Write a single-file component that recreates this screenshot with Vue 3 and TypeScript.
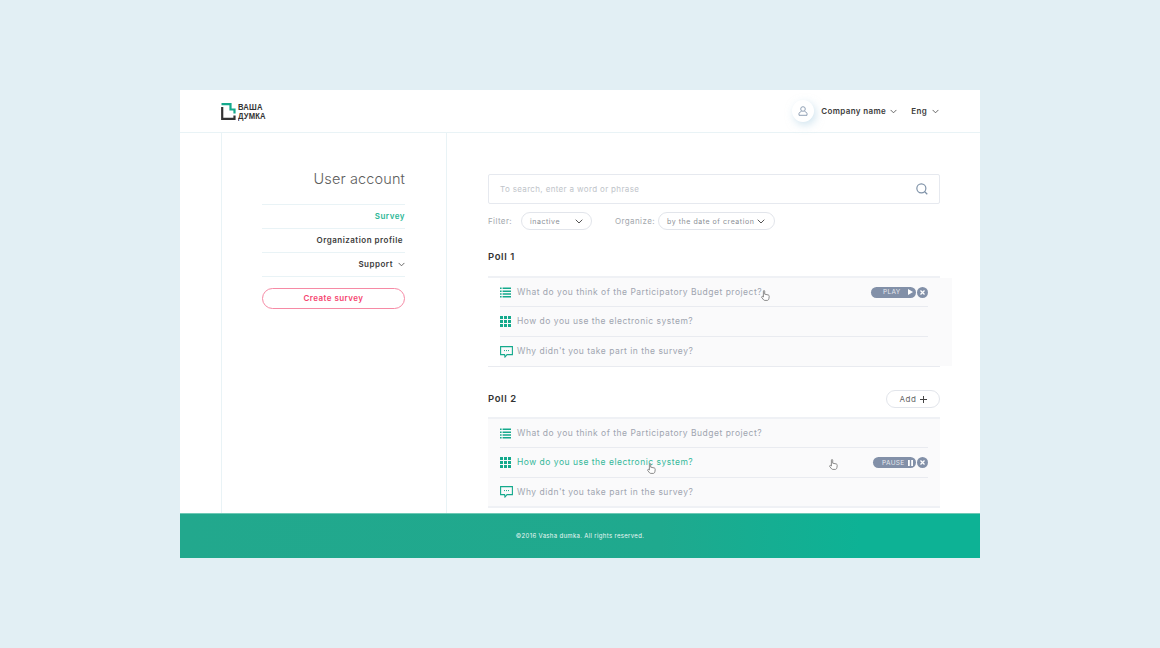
<template>
  <div class="page">
    <div class="card">
      <header class="topbar">
        <div class="logo">
          <svg class="logo-mark" width="15" height="17" viewBox="0 0 15 17">
            <path d="M.5 1.2H9.5V6.5H13.5V10.5" fill="none" stroke="#14a98c" stroke-width="2.2" />
            <path d="M1.2 4V15.8H13.5V12.5" fill="none" stroke="#333" stroke-width="2.2" />
          </svg>
          <div class="logo-text"><span>ВАША</span><span>ДУМКА</span></div>
        </div>
        <div class="top-right">
          <div class="avatar">
            <svg width="10" height="10" viewBox="0 0 10 10" fill="none" stroke="#8496ad" stroke-width="0.9">
              <circle cx="5" cy="3" r="2.3" />
              <path d="M3.5 5C3.5 6 1 6 1 7.5V9.3H9V7.5C9 6 6.5 6 6.5 5" />
            </svg>
          </div>
          <span class="top-link company">Company name</span>
          <svg class="chev" width="7" height="5" viewBox="0 0 8 5"><path d="M.7.7 4 4 7.3.7" /></svg>
          <span class="top-link lang">Eng</span>
          <svg class="chev" width="7" height="5" viewBox="0 0 8 5"><path d="M.7.7 4 4 7.3.7" /></svg>
        </div>
      </header>

      <div class="body">
        <aside class="sidebar">
          <h1>User account</h1>
          <nav class="side-nav">
            <a class="active">Survey</a>
            <a class="indent">Organization profile</a>
            <a>
              Support
              <svg class="chev" width="7" height="5" viewBox="0 0 8 5"><path d="M.7.7 4 4 7.3.7" /></svg>
            </a>
          </nav>
          <button class="create" type="button">Create survey</button>
        </aside>

        <main class="content">
          <div class="search">
            <span>To search, enter a word or phrase</span>
            <svg width="12" height="12" viewBox="0 0 13 13" fill="none" stroke="#7f92a8" stroke-width="1.3">
              <circle cx="5.8" cy="5.8" r="4.9" />
              <path d="M9.2 9.2 12.2 12.2" />
            </svg>
          </div>

          <div class="filters">
            <span class="filter-label">Filter:</span>
            <div class="pill inactive">
              <span>inactive</span>
              <svg class="chev" width="8" height="5" viewBox="0 0 8 5"><path d="M.7.7 4 4 7.3.7" /></svg>
            </div>
            <span class="filter-label organize">Organize:</span>
            <div class="pill by-date">
              <span>by the date of creation</span>
              <svg class="chev" width="8" height="5" viewBox="0 0 8 5"><path d="M.7.7 4 4 7.3.7" /></svg>
            </div>
          </div>

          <section v-for="poll in polls" :key="poll.title" class="poll">
            <div class="poll-head">
              <h2>{{ poll.title }}</h2>
              <button v-if="poll.addable" class="add" type="button">
                Add
                <svg width="7" height="7" viewBox="0 0 7 7"><path d="M3.5 0V7M0 3.5H7" stroke="#444" stroke-width="1" /></svg>
              </button>
            </div>
            <div class="list" :class="{ shifted: poll.shifted }">
              <div
                v-for="row in poll.rows"
                :key="row.text"
                class="row"
                :class="{ green: row.green }"
              >
                <svg v-if="row.icon === 'list'" class="icon" width="11" height="11" viewBox="0 0 11 11" fill="#14a98c">
                  <path d="M0 .5H1.6V2H0ZM2.6 .5H11V2H2.6ZM0 3.4H1.6V4.9H0ZM2.6 3.4H11V4.9H2.6ZM0 6.2H1.6V7.7H0ZM2.6 6.2H11V7.7H2.6ZM0 9H1.6V10.5H0ZM2.6 9H11V10.5H2.6Z" />
                </svg>
                <svg v-else-if="row.icon === 'grid'" class="icon" width="11" height="11" viewBox="0 0 11 11" fill="#14a98c">
                  <path d="M0 0H3V3H0ZM4 0H7V3H4ZM8 0H11V3H8ZM0 4H3V7H0ZM4 4H7V7H4ZM8 4H11V7H8ZM0 8H3V11H0ZM4 8H7V11H4ZM8 8H11V11H8Z" />
                </svg>
                <svg v-else class="icon chat" width="13" height="12" viewBox="0 0 13 12" fill="none">
                  <path d="M.6.6H12.4V8.6H7L5 11 4.6 8.6H.6Z" stroke="#14a98c" stroke-width="1.1" />
                  <path d="M4 4.6H9" stroke="#14a98c" stroke-width="1" stroke-dasharray="1 1" />
                </svg>
                <span class="question">{{ row.text }}</span>
                <div v-if="row.action" class="actions">
                  <span class="state" :class="row.action">
                    {{ row.action === 'play' ? 'PLAY' : 'PAUSE' }}
                    <svg v-if="row.action === 'play'" width="5" height="6" viewBox="0 0 5 6"><path d="M0 0 5 3 0 6Z" fill="#fff" /></svg>
                    <svg v-else width="5" height="6" viewBox="0 0 5 6"><path d="M0 0H1.8V6H0ZM3.2 0H5V6H3.2Z" fill="#fff" /></svg>
                  </span>
                  <span class="close">
                    <svg width="5" height="5" viewBox="0 0 5 5"><path d="M.5.5 4.5 4.5M4.5.5.5 4.5" stroke="#fff" stroke-width="1.3" /></svg>
                  </span>
                </div>
              </div>
            </div>
          </section>

          <svg
            v-for="hand in hands"
            :key="hand.id"
            class="hand"
            :class="hand.id"
            width="9"
            height="11"
            viewBox="0 0 9 11"
            fill="#fff"
            stroke="#6e6e6e"
            stroke-width="0.8"
          >
            <path d="M2.4 6V1.2C2.4.3 3.7.3 3.7 1.2V4.2L7 4.9C7.9 5.1 8.3 5.6 8.2 6.5L7.9 8.6C7.8 9.4 7.2 10.4 6.4 10.4H3.7C2.9 10.4 2.6 9.8 2.1 9.2L.8 7.6C.2 6.8 1.2 5.7 2.4 7Z" />
          </svg>
        </main>
      </div>

      <footer class="footer">©2016 Vasha dumka. All rights reserved.</footer>
    </div>
  </div>
</template>

<script setup lang="ts">
interface Row {
  icon: "list" | "grid" | "chat";
  text: string;
  green?: boolean;
  action?: "play" | "pause";
}

interface Poll {
  title: string;
  addable?: boolean;
  shifted?: boolean;
  rows: Row[];
}

const polls: Poll[] = [
  {
    title: "Poll 1",
    shifted: true,
    rows: [
      { icon: "list", text: "What do you think of the Participatory Budget project?", action: "play" },
      { icon: "grid", text: "How do you use the electronic system?" },
      { icon: "chat", text: "Why didn't you take part in the survey?" },
    ],
  },
  {
    title: "Poll 2",
    addable: true,
    rows: [
      { icon: "list", text: "What do you think of the Participatory Budget project?" },
      { icon: "grid", text: "How do you use the electronic system?", green: true, action: "pause" },
      { icon: "chat", text: "Why didn't you take part in the survey?" },
    ],
  },
];

const hands = [{ id: "hand-a" }, { id: "hand-b" }, { id: "hand-c" }];
</script>

<style>
html,
body {
  margin: 0;
  background: #e2eff4;
}
</style>

<style scoped>
.page {
  width: 1160px;
  height: 648px;
  padding-top: 90px;
  box-sizing: border-box;
  font-family: Inter, "Liberation Sans", sans-serif;
  overflow: hidden;
}

.card {
  width: 800px;
  height: 468px;
  margin-left: 180px;
  background: #fff;
  display: flex;
  flex-direction: column;
}

.topbar {
  height: 43px;
  box-sizing: border-box;
  flex: none;
  border-bottom: 1px solid #e9f3f6;
  padding: 0 41px;
  display: flex;
  align-items: center;
  justify-content: space-between;
}

.logo {
  display: flex;
  align-items: center;
  gap: 2px;
  margin-top: 1px;
}

.logo-mark {
  flex: none;
}

.logo-text {
  display: flex;
  flex-direction: column;
  font-family: "Liberation Sans", sans-serif;
  font-weight: 700;
  font-size: 8.5px;
  line-height: 8.5px;
  color: #333;
  letter-spacing: 0.2px;
  transform: scaleX(0.9);
  transform-origin: left center;
}

.top-right {
  display: flex;
  align-items: center;
}

.avatar {
  width: 22px;
  height: 22px;
  border-radius: 50%;
  background: #fff;
  box-shadow: 2px 3px 8px rgba(170, 205, 225, 0.55);
  display: flex;
  align-items: center;
  justify-content: center;
  margin-right: 7px;
}

.top-link {
  font-size: 8px;
  font-weight: 600;
  letter-spacing: 0.36px;
  color: #3c3c3c;
  white-space: nowrap;
}

.company {
  margin-top: -1px;
  margin-right: 4px;
}

.lang {
  margin-left: 14px;
  margin-right: 5px;
}

.chev {
  flex: none;
  fill: none;
  stroke: #555;
  stroke-width: 1;
}

.body {
  flex: 1;
  min-height: 0;
  display: flex;
  overflow: hidden;
}

.sidebar {
  width: 226px;
  flex: none;
  margin-left: 41px;
  box-sizing: border-box;
  border-left: 1px solid #e9f3f6;
  border-right: 1px solid #e9f3f6;
  padding: 36px 41px 0 40px;
  text-align: right;
}

.sidebar h1 {
  margin: 0;
  font-size: 14.5px;
  line-height: 20px;
  font-weight: 300;
  letter-spacing: 0.12px;
  color: #5d5d5d;
}

.side-nav {
  margin-top: 15px;
  border-top: 1px solid #e9f3f6;
}

.side-nav a {
  height: 24px;
  box-sizing: border-box;
  border-bottom: 1px solid #e9f3f6;
  padding-bottom: 1px;
  display: flex;
  align-items: center;
  justify-content: flex-end;
  gap: 5px;
  font-size: 8px;
  font-weight: 600;
  letter-spacing: 0.5px;
  color: #3c3c3c;
}

.side-nav a.active {
  color: #2bb797;
}

.side-nav a.indent {
  padding-right: 2px;
}

.create {
  display: block;
  width: 143px;
  height: 21px;
  margin-top: 11px;
  padding: 0 0 1px;
  border: 1px solid #f68aa5;
  border-radius: 11px;
  background: #fff;
  font-family: inherit;
  font-size: 8px;
  font-weight: 600;
  letter-spacing: 0.45px;
  color: #f5456f;
}

.content {
  position: relative;
  flex: 1;
  min-width: 0;
  padding: 41px 40px 0 41px;
}

.search {
  height: 30px;
  box-sizing: border-box;
  border: 1px solid #e6e9ef;
  border-radius: 2px;
  padding: 0 11px 0 11px;
  display: flex;
  align-items: center;
  justify-content: space-between;
  font-size: 8px;
  letter-spacing: 0.35px;
  color: #c0c4ca;
}

.search span {
  margin-top: -1px;
}

.filters {
  margin-top: 8px;
  height: 18px;
  display: flex;
  align-items: center;
  font-size: 8px;
  letter-spacing: 0.4px;
}

.filter-label {
  width: 33px;
  flex: none;
  margin-top: -1px;
  color: #a3a7ad;
  white-space: nowrap;
}

.pill {
  height: 18px;
  box-sizing: border-box;
  border: 1px solid #e2e5eb;
  border-radius: 9px;
  display: flex;
  align-items: center;
  justify-content: space-between;
  color: #8b8f96;
  font-size: 7px;
  letter-spacing: 0.55px;
  white-space: nowrap;
}

.inactive {
  width: 71px;
  padding: 0 8px 0 8px;
}

.organize {
  width: 43px;
  margin-left: 23px;
}

.by-date {
  width: 117px;
  padding: 0 9px 0 8px;
}

.poll {
  position: relative;
}

.poll-head {
  height: 18px;
  margin-top: 18px;
  display: flex;
  align-items: center;
  justify-content: space-between;
}

.poll + .poll .poll-head {
  margin-top: 23px;
}

.poll-head h2 {
  margin: -1px 0 0;
  font-size: 9.5px;
  font-weight: 600;
  letter-spacing: 0.6px;
  color: #333;
}

.add {
  width: 54px;
  height: 18px;
  padding: 0;
  border: 1px solid #e2e5eb;
  border-radius: 9px;
  background: #fff;
  display: flex;
  align-items: center;
  justify-content: center;
  gap: 3px;
  font-family: inherit;
  font-size: 8px;
  letter-spacing: 0.6px;
  color: #666;
}

.list {
  position: relative;
  margin-top: 10px;
  padding: 0 12px;
  background: #fafafb;
  border-top: 2px solid #eff1f5;
  border-bottom: 1px solid #e9ebf0;
}

.poll + .poll .list {
  margin-top: 9px;
  border-bottom: 2px solid #eff1f5;
}

.list.shifted {
  background: none;
}

/* poll 1's panel is pushed 12px past the column */
.list.shifted::before {
  content: "";
  position: absolute;
  top: 0;
  bottom: 0;
  left: 12px;
  right: -12px;
  background: #fafafb;
}

.row {
  position: relative;
  height: 30px;
  box-sizing: border-box;
  border-bottom: 1px solid #e9ebf0;
  display: flex;
  align-items: center;
  font-size: 8.5px;
  letter-spacing: 0.5px;
  color: #a0a5b0;
}

.row:first-child {
  height: 29px;
}

.row:last-child {
  height: 29px;
  border-bottom: 0;
}

.poll + .poll .row:last-child {
  height: 28px;
}

.row.green {
  color: #35b89a;
}

.icon {
  flex: none;
  margin-right: 6px;
}

.chat {
  margin-right: 4px;
}

.question {
  flex: 1;
  margin-top: -1px;
}

.actions {
  display: flex;
  align-items: center;
  gap: 1px;
}

.state {
  height: 11px;
  border-radius: 6px;
  background: #8290a8;
  box-sizing: border-box;
  display: flex;
  align-items: center;
  justify-content: space-between;
  padding: 0 3px 0 12px;
  font-size: 6.5px;
  letter-spacing: 0.3px;
  color: #e6e9ef;
}

.state.play {
  width: 45px;
}

.state.pause {
  width: 43px;
  padding-left: 9px;
}

.close {
  width: 11px;
  height: 11px;
  border-radius: 50%;
  background: #8290a8;
  display: flex;
  align-items: center;
  justify-content: center;
}

.hand {
  position: absolute;
}

.hand-a {
  left: 314px;
  top: 157px;
}

.hand-b {
  left: 200px;
  top: 330px;
}

.hand-c {
  left: 382px;
  top: 326px;
}

.footer {
  height: 45px;
  flex: none;
  border-top: 1px solid #6ec9b5;
  box-sizing: border-box;
  padding-bottom: 2px;
  background: linear-gradient(90deg, #22a88d 0%, #1fa98e 60%, #0db295 85%);
  display: flex;
  align-items: center;
  justify-content: center;
  font-size: 6px;
  letter-spacing: 0.33px;
  color: #e9f7f4;
}
</style>
